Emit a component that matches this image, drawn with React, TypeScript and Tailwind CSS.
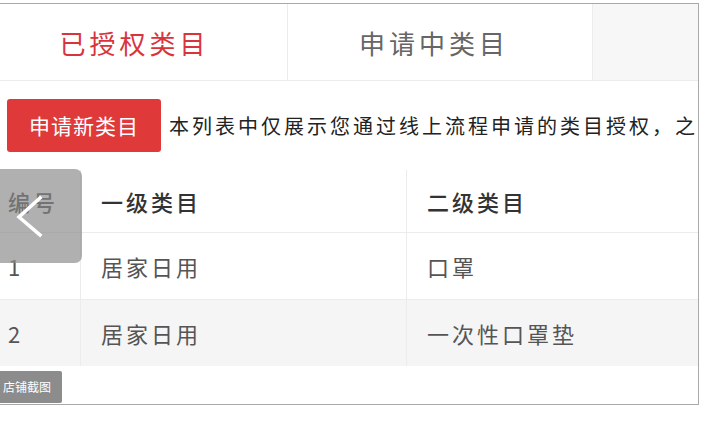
export default function App() {
  const font = { fontFamily: '"Noto Sans CJK SC", "Noto Sans", sans-serif' };
  return (
    <div className="relative w-[727px] h-[433px] bg-white overflow-hidden" style={font}>
      <div className="mt-[3px] w-[699px] h-[402px] border-t border-r border-b border-[#a9a9a9] flex flex-col overflow-hidden">
        {/* tabs */}
        <div className="flex h-[77px] shrink-0 border-b border-[#ececec]">
          <div className="w-[288px] border-r border-[#ececec] flex items-center justify-center text-[26px] tracking-[4px] text-[#d9343c] pr-[18px]">
            已授权类目
          </div>
          <div className="w-[305px] border-r border-[#ececec] flex items-center justify-center text-[26px] tracking-[4px] text-[#666] pr-[12px]">
            申请中类目
          </div>
          <div className="flex-1 bg-[#f7f7f7]" />
        </div>
        {/* toolbar */}
        <div className="h-[89px] shrink-0 flex items-start pt-[18px] pl-[7px] whitespace-nowrap">
          <div className="w-[154px] h-[53px] rounded-[3px] bg-[#e0393a] text-white text-[21px] tracking-[1px] flex items-center justify-center shrink-0">
            申请新类目
          </div>
          <div className="ml-[8px] h-[53px] flex items-center text-[20px] tracking-[3px] text-[#222]">
            本列表中仅展示您通过线上流程申请的类目授权，之前
          </div>
        </div>
        {/* table */}
        <div className="flex flex-col text-[22px] tracking-[3px]">
          <div className="flex h-[63px] border-b border-[#ececec] text-[#333] font-medium">
            <div className="w-[81px] border-r border-[#ececec] flex items-center pl-[8px]">编号</div>
            <div className="w-[326px] border-r border-[#ececec] flex items-center pl-[20px]">一级类目</div>
            <div className="flex-1 flex items-center pl-[20px]">二级类目</div>
          </div>
          <div className="flex h-[67px] border-b border-[#ececec] text-[#555]">
            <div className="w-[81px] border-r border-[#ececec] flex items-center pl-[8px]">1</div>
            <div className="w-[326px] border-r border-[#ececec] flex items-center pl-[20px]">居家日用</div>
            <div className="flex-1 flex items-center pl-[20px]">口罩</div>
          </div>
          <div className="flex h-[66px] bg-[#f5f5f5] text-[#555]">
            <div className="w-[81px] border-r border-[#ececec] flex items-center pl-[8px]">2</div>
            <div className="w-[326px] border-r border-[#ececec] flex items-center pl-[20px]">居家日用</div>
            <div className="flex-1 flex items-center pl-[20px]">一次性口罩垫</div>
          </div>
        </div>
      </div>
      {/* overlay back button */}
      <div className="absolute left-0 top-[169px] w-[82px] h-[94px] rounded-r-[7px] bg-[#8f8f8f]/70 flex items-center justify-start">
        <svg width="82" height="94" viewBox="0 0 82 94">
          <polyline points="40,29 19,48 40,66" fill="none" stroke="white" strokeWidth="3.5" strokeLinecap="square" />
        </svg>
      </div>
      {/* badge */}
      <div className="absolute left-0 top-[371px] w-[62px] h-[32px] rounded-r-[2px] bg-[#8c8c8c] text-white text-[12px] flex items-center pl-[3px]">
        店铺截图
      </div>
    </div>
  );
}
